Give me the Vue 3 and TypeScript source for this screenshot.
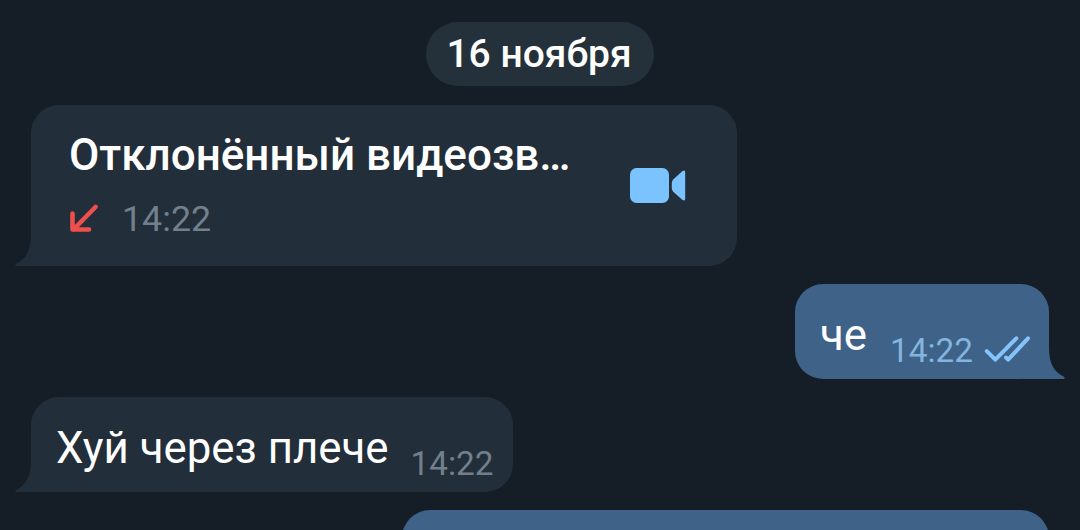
<script setup lang="ts">
interface Call {
  title: string
  time: string
}

interface Message {
  text: string
  time: string
  outgoing: boolean
}

const date = '16 ноября'
const call: Call = { title: 'Отклонённый видеозв…', time: '14:22' }
const messages: Message[] = [
  { text: 'че', time: '14:22', outgoing: true },
  { text: 'Хуй через плече', time: '14:22', outgoing: false },
]
</script>

<template>
  <main class="chat">
    <div class="date">{{ date }}</div>

    <section class="bubble call incoming">
      <svg class="tail" width="42" height="36" viewBox="0 0 42 36">
        <path d="M16 0V4C16 19 11 28 1.5 32.4C-.3 33 .1 35 1.8 35H42V0Z" />
      </svg>
      <div class="call-info">
        <div class="call-title">{{ call.title }}</div>
        <div class="call-meta">
          <svg class="arrow" width="30" height="30" viewBox="0 0 30 30">
            <path d="M26.5 3L4.5 25.5M3.5 9.5V25.5H20" />
          </svg>
          <span class="call-time">{{ call.time }}</span>
        </div>
      </div>
      <svg class="camera" width="56" height="36" viewBox="0 0 56 36">
        <rect width="39" height="35" rx="6.5" />
        <path d="M43.2 11.5L52.2 3.3Q55.2 1.2 55.2 4.5V30.5Q55.2 33.9 52.2 31.8L43.2 23.8Q41.8 22.2 41.8 20V15.4Q41.8 13 43.2 11.5Z" />
      </svg>
    </section>

    <section
      v-for="message in messages"
      :key="message.text"
      class="bubble message"
      :class="message.outgoing ? 'outgoing' : 'incoming'"
    >
      <svg class="tail" width="42" height="36" viewBox="0 0 42 36">
        <path d="M16 0V4C16 19 11 28 1.5 32.4C-.3 33 .1 35 1.8 35H42V0Z" />
      </svg>
      <span class="text">{{ message.text }}</span>
      <span class="time">{{ message.time }}</span>
      <svg v-if="message.outgoing" class="checks" width="46" height="28" viewBox="0 0 46 28">
        <path d="M2.8 16.2L11.3 24.7L32.3 3.3M22 22.5L24.2 24.7L44 3.3" />
      </svg>
    </section>

    <section class="bubble outgoing next"></section>
  </main>
</template>

<style>
body {
  margin: 0;
  background: #151e26;
}
</style>

<style scoped>
.chat {
  box-sizing: border-box;
  width: 1080px;
  height: 530px;
  padding: 22px 31px 0;
  overflow: hidden;
  display: flex;
  flex-direction: column;
  gap: 18px;
  background: #151e26;
  color: #fff;
  font-family: Roboto, "Liberation Sans", sans-serif;
  white-space: nowrap;
}

.date {
  box-sizing: border-box;
  flex: none;
  align-self: center;
  width: 228px;
  height: 64px;
  margin-bottom: 1px;
  padding-right: 2px;
  border-radius: 32px;
  background: #24313b;
  font-size: 39px;
  font-weight: 500;
  line-height: 65px;
  text-align: center;
}

.bubble {
  box-sizing: border-box;
  position: relative;
  flex: none;
  display: flex;
  border-radius: 28px;
}

.incoming {
  align-self: flex-start;
  background: #222e39;
  fill: #222e39;
}

.outgoing {
  align-self: flex-end;
  background: #3e6288;
  fill: #3e6288;
}

.tail {
  position: absolute;
  bottom: -1px;
  left: -16px;
}

.outgoing .tail {
  right: -16px;
  left: auto;
  transform: scaleX(-1);
}

.call {
  width: 706px;
  height: 161px;
  padding: 24px 51px 0 38px;
  justify-content: space-between;
}

.call-info,
.call-title,
.call-meta,
.text,
.time,
.camera {
  position: relative;
}

.call-title {
  font-size: 44px;
  font-weight: 500;
  line-height: 52px;
}

.call-meta {
  display: flex;
  align-items: center;
  gap: 23px;
  margin-top: 17px;
}

.arrow {
  fill: none;
  stroke: #ee4e4c;
  stroke-width: 4.6;
  stroke-linecap: round;
  stroke-linejoin: round;
}

.call-time {
  color: #72808d;
  font-size: 35.8px;
  line-height: 42px;
}

.camera {
  margin-top: 39px;
  fill: #7bc3ff;
}

.message {
  height: 95px;
  padding: 25px 19px 0 25px;
}

.message.outgoing {
  width: 254px;
}

.text {
  font-size: 43.8px;
  line-height: 52px;
}

.time {
  margin: 22px 0 0 22px;
  color: #72808d;
  font-size: 33.3px;
  line-height: 40px;
}

.outgoing .time {
  margin-left: 23px;
  color: #83b5df;
}

.checks {
  position: relative;
  flex: none;
  margin: 26px 0 0 11px;
  fill: none;
  stroke: #84c4fb;
  stroke-width: 4;
  stroke-linecap: round;
  stroke-linejoin: round;
}

.message.incoming {
  width: 482px;
}

.next {
  width: 647px;
  height: 95px;
}
</style>
